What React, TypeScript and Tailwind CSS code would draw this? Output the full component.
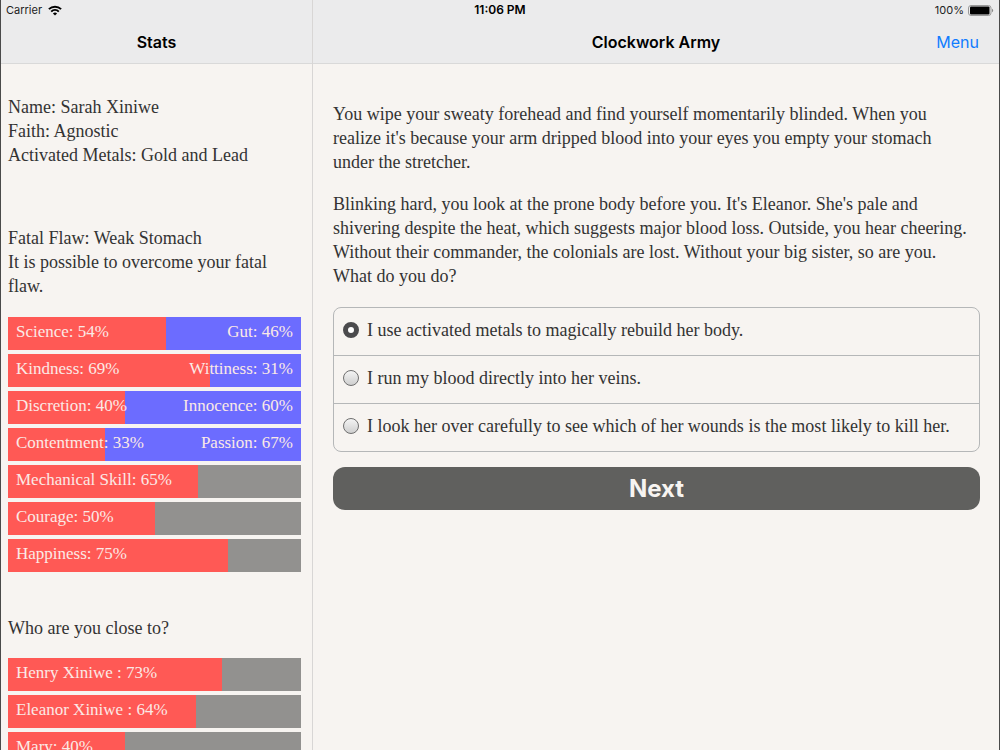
import { useState } from 'react';

interface Stat {
  label: string;
  value: number;
  opposite?: string;
}

const traits: Stat[] = [
  { label: 'Science', value: 54, opposite: 'Gut' },
  { label: 'Kindness', value: 69, opposite: 'Wittiness' },
  { label: 'Discretion', value: 40, opposite: 'Innocence' },
  { label: 'Contentment', value: 33, opposite: 'Passion' },
  { label: 'Mechanical Skill', value: 65 },
  { label: 'Courage', value: 50 },
  { label: 'Happiness', value: 75 },
];

const relationships: Stat[] = [
  { label: 'Henry Xiniwe ', value: 73 },
  { label: 'Eleanor Xiniwe ', value: 64 },
  { label: 'Mary', value: 40 },
];

const choices = [
  'I use activated metals to magically rebuild her body.',
  'I run my blood directly into her veins.',
  'I look her over carefully to see which of her wounds is the most likely to kill her.',
];

function StatBar({ label, value, opposite }: Stat) {
  return (
    <li className={`relative h-[33px] text-[17px] ${opposite ? 'bg-[#6c6cff]' : 'bg-[#92918f]'}`}>
      <div className="absolute inset-y-0 left-0 bg-[#ff5955]" style={{ width: `${value}%` }} />
      <div className="relative flex justify-between px-2 pt-[3px] text-[#fbe9e6]">
        <span>{label}: {value}%</span>
        {opposite && <span>{opposite}: {100 - value}%</span>}
      </div>
    </li>
  );
}

function StatusBar() {
  return (
    <div className="absolute inset-x-0 top-0 grid h-5 grid-cols-3 items-center px-[5px] font-['Inter',sans-serif] text-[11px] leading-5 text-[#222]">
      <div className="flex items-center gap-1.5">
        <span>Carrier</span>
        <svg className="h-[11px] w-[14px]" viewBox="0 0 14 11" fill="none" stroke="#000" strokeWidth="2">
          <path d="M0.9 4.1a8.8 8.8 0 0 1 12.2 0" />
          <path d="M3.2 6.6a5.5 5.5 0 0 1 7.6 0" />
          <path d="M7 10.6L4.9 8.5a3 3 0 0 1 4.2 0z" fill="#000" stroke="none" />
        </svg>
      </div>
      <span className="text-center text-xs leading-5 font-semibold text-black">11:06 PM</span>
      <div className="flex items-center justify-end gap-1">
        <span>100%</span>
        <svg className="h-[11px] w-[26px]" viewBox="0 0 26 11">
          <rect x="0.5" y="0.5" width="22.5" height="10" rx="2.5" fill="none" stroke="#999" />
          <rect x="2" y="1.5" width="19.5" height="8" rx="1" fill="#000" />
          <path d="M24 3.8v3.4c1.6-.4 1.6-3 0-3.4z" fill="#888" />
        </svg>
      </div>
    </div>
  );
}

export default function App() {
  const [selected, setSelected] = useState(0);

  return (
    <div className="relative flex h-screen overflow-hidden border-x border-[#4a4a4a] bg-[#f7f4f1] font-['Palatino','Liberation_Serif',serif] text-[18px] leading-6 text-[#333]">
      <aside className="flex w-[312px] shrink-0 flex-col border-r border-[#d8d6d5]">
        <header className="flex h-16 shrink-0 items-center justify-center border-b border-[#d9d9d9] bg-[#ebebec] pt-5 font-['Inter',sans-serif] text-black">
          <h1 className="text-base font-semibold">Stats</h1>
        </header>
        <div className="flex-1 overflow-y-auto pt-[31px] pr-[11px] pl-[7px] [scrollbar-width:none]">
          <p>
            Name: Sarah Xiniwe<br />
            Faith: Agnostic<br />
            Activated Metals: Gold and Lead
          </p>
          <p className="mt-[59px]">
            Fatal Flaw: Weak Stomach<br />
            It is possible to overcome your fatal flaw.
          </p>
          <ul className="mt-[19px] flex flex-col gap-1">
            {traits.map((s) => <StatBar key={s.label} {...s} />)}
          </ul>
          <p className="mt-11">Who are you close to?</p>
          <ul className="mt-[18px] flex flex-col gap-1">
            {relationships.map((s) => <StatBar key={s.label} {...s} />)}
          </ul>
        </div>
      </aside>

      <main className="flex min-w-0 flex-1 flex-col">
        <header className="grid h-16 shrink-0 grid-cols-[1fr_auto_1fr] items-center border-b border-[#d9d9d9] bg-[#ebebec] px-5 pt-5 font-['Inter',sans-serif] text-base">
          <h1 className="col-start-2 font-semibold text-black">Clockwork Army</h1>
          <button type="button" className="justify-self-end text-[#107cff]">Menu</button>
        </header>
        <div className="flex-1 overflow-y-auto pt-[38px] pr-[19px] pl-5 [scrollbar-width:none]">
          <p className="pr-2">
            You wipe your sweaty forehead and find yourself momentarily blinded. When you realize it's
            because your arm dripped blood into your eyes you empty your stomach under the stretcher.
          </p>
          <p className="mt-[18px] pr-2">
            Blinking hard, you look at the prone body before you. It's Eleanor. She's pale and
            shivering despite the heat, which suggests major blood loss. Outside, you hear cheering.
            Without their commander, the colonials are lost. Without your big sister, so are you.
            What do you do?
          </p>
          <form onSubmit={(e) => e.preventDefault()}>
            <div className="mt-[19px] divide-y divide-[#b5b7b8] rounded-lg border border-[#b5b7b8]">
              {choices.map((choice, i) => (
                <label key={choice} className="box-content flex h-[43px] items-center gap-2 px-[9px] pb-1">
                  <input
                    type="radio"
                    name="choice"
                    checked={selected === i}
                    onChange={() => setSelected(i)}
                    className="size-4 shrink-0 appearance-none rounded-full border border-[#6f6f6f] bg-linear-to-b from-[#f4f4f4] to-[#cfcfcf] checked:border-[5px] checked:border-[#4b4b4d] checked:bg-white checked:bg-none"
                  />
                  <span>{choice}</span>
                </label>
              ))}
            </div>
            <button
              type="submit"
              className="mt-[15px] h-[43px] w-full rounded-xl bg-[#60605e] font-['Inter',sans-serif] text-2xl font-bold text-[#f7f4f1]"
            >
              Next
            </button>
          </form>
        </div>
      </main>

      <StatusBar />
    </div>
  );
}
